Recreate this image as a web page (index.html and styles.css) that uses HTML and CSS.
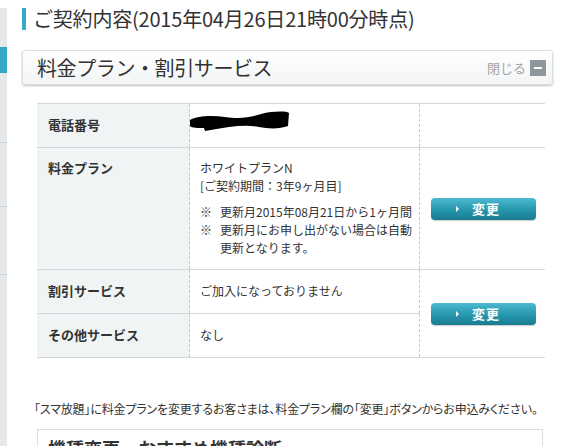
FILE: index.html
```html
<!DOCTYPE html>
<html lang="ja">
<head>
    <meta charset="UTF-8">
    <meta name="viewport" content="width=device-width, initial-scale=1.0">
    <title>ご契約内容</title>
    <link rel="stylesheet" href="styles.css">
</head>
<body>
    <div class="page">
        <!-- left menu strip -->
        <aside class="side">
            <div class="side-item side-first"></div>
            <div class="side-item side-active"></div>
            <div class="side-item side-a"></div>
            <div class="side-item side-b"></div>
            <div class="side-item side-c"></div>
            <div class="side-item side-rest"></div>
        </aside>

        <main class="main">
            <h1 class="title">ご契約内容(2015年04月26日21時00分時点)</h1>

            <div class="panel-head">
                <h2>料金プラン・割引サービス</h2>
                <span class="close">閉じる<i class="minus"></i></span>
            </div>

            <table class="plan">
                <tr>
                    <th>電話番号</th>
                    <td class="val">
                        <svg class="blot" width="102" height="22" viewBox="0 0 102 22">
                            <path d="M1 9 C8 5 22 4 36 6 C50 8 60 7 72 3 C84 0 97 0 100 2 L99 15 C91 18 80 18 70 16 C60 14 50 15 40 16 C31 17 24 19 16 20 L15 17 C9 17 3 17 1 15 Z" fill="#000"/>
                        </svg>
                    </td>
                    <td class="act"></td>
                </tr>
                <tr class="tall">
                    <th>料金プラン</th>
                    <td class="val">
                        ホワイトプランN<br>
                        [ご契約期間：3年9ヶ月目]
                        <ul class="notes">
                            <li><span class="mark">※</span><span>更新月2015年08月21日から1ヶ月間</span></li>
                            <li><span class="mark">※</span><span>更新月にお申し出がない場合は自動<br>更新となります。</span></li>
                        </ul>
                    </td>
                    <td class="act mid"><a class="btn" href="#"><span class="tri"></span>変更</a></td>
                </tr>
                <tr>
                    <th>割引サービス</th>
                    <td class="val">ご加入になっておりません</td>
                    <td class="act" rowspan="2"><a class="btn" href="#"><span class="tri"></span>変更</a></td>
                </tr>
                <tr>
                    <th>その他サービス</th>
                    <td class="val">なし</td>
                </tr>
            </table>

            <p class="note">「スマ放題」に料金プランを変更するお客さまは、料金プラン欄の「変更」ボタンからお申込みください。</p>

            <div class="box">
                <h3>機種変更・おすすめ機種診断</h3>
            </div>
        </main>
    </div>
</body>
</html>
```

FILE: styles.css
```css
body {
    margin: 0;
    font-family: "Noto Sans CJK JP", "Noto Sans", sans-serif;
    color: #333;
    background-color: #fff;
    overflow: hidden;
}
.page {
    display: flex;
    height: 446px;
}

/* left menu strip */
.side {
    width: 7px;
    padding-top: 8px;
    display: flex;
    flex-direction: column;
}
.side-item {
    background-color: #e6e9eb;
    border-bottom: 1px solid #c9cfd2;
}
.side-first { height: 39px; border-bottom: none; }
.side-active { height: 26px; background-color: #35aac4; border-bottom: none; }
.side-a { height: 69px; }
.side-b { height: 63px; }
.side-c { height: 67px; }
.side-rest { flex: 1; border-bottom: none; }

.main {
    width: 531px;
    padding: 8px 0 0 15px;
}
.title {
    margin: 0;
    height: 22px;
    line-height: 22px;
    font-size: 20px;
    font-weight: normal;
    border-left: 4px solid #35aac4;
    padding-left: 7px;
    white-space: nowrap;
    letter-spacing: -0.2px;
}

/* panel header */
.panel-head {
    margin-top: 20px;
    height: 33px;
    display: flex;
    align-items: center;
    justify-content: space-between;
    padding: 0 6px 0 14px;
    border: 1px solid #dcdfe1;
    border-radius: 3px;
    background: linear-gradient(#ffffff, #f2f4f5);
    box-shadow: 0 1px 2px rgba(0, 0, 0, 0.25);
}
.panel-head h2 {
    margin: 0;
    font-size: 20px;
    font-weight: normal;
    line-height: 24px;
    letter-spacing: -0.4px;
}
.close {
    display: flex;
    align-items: center;
    gap: 4px;
    font-size: 13px;
    color: #a3a3a3;
}
.minus {
    width: 16px;
    height: 16px;
    background-color: #8e979b;
    position: relative;
}
.minus::after {
    content: "";
    position: absolute;
    left: 4px;
    top: 7px;
    width: 8px;
    height: 2px;
    background-color: #fff;
}

/* contract table */
.plan {
    margin: 18px 0 0 15px;
    width: 508px;
    border-collapse: collapse;
    font-size: 12px;
    line-height: 18px;
}
.plan tr {
    border-top: 1px solid #d3d8da;
    border-bottom: 1px solid #d3d8da;
}
.plan th {
    width: 131px;
    padding: 12px 10px 13px 11px;
    text-align: left;
    font-size: 13px;
    font-weight: bold;
    background-color: #f0f4f5;
    border-right: 1px dashed #c8c8c8;
    vertical-align: middle;
}
.plan td.val {
    width: 219px;
    padding: 12px 0 13px 10px;
    vertical-align: middle;
    border-right: 1px dashed #c8c8c8;
}
.plan .tall th,
.plan .tall td.val {
    vertical-align: top;
    padding-top: 11px;
    padding-bottom: 12px;
}
.plan td.act {
    text-align: center;
    vertical-align: middle;
    padding: 0;
}
.blot {
    display: block;
    margin: -5px 0 1px -11px;
}
.notes {
    list-style: none;
    margin: 8px 0 0;
    padding: 0;
}
.notes li {
    display: flex;
}
.mark {
    width: 20px;
    flex-shrink: 0;
}

.btn {
    display: inline-flex;
    align-items: center;
    justify-content: center;
    gap: 13px;
    box-sizing: border-box;
    width: 105px;
    height: 22px;
    padding-right: 10px;
    margin-left: 1px;
    border-radius: 4px;
    background: linear-gradient(#4cbad0, #2596ad 55%, #1a7b90);
    box-shadow: 0 1px 1px rgba(0, 0, 0, 0.2);
    color: #fff;
    font-size: 13px;
    font-weight: bold;
    text-decoration: none;
    letter-spacing: 1px;
}
.tri {
    width: 0;
    height: 0;
    border-left: 3px solid #fff;
    border-top: 3px solid transparent;
    border-bottom: 3px solid transparent;
}

.note {
    margin: 42px 0 0 12px;
    font-size: 12px;
    line-height: 18px;
    white-space: nowrap;
    font-feature-settings: "palt";
    letter-spacing: -0.15px;
}
.box {
    margin: 11px 0 0 15px;
    width: 506px;
    border: 1px solid #dcdfe1;
    padding: 6px 0 0 10px;
    box-sizing: border-box;
    height: 40px;
}
.box h3 {
    margin: 0;
    font-size: 18px;
    line-height: 24px;
}
```
